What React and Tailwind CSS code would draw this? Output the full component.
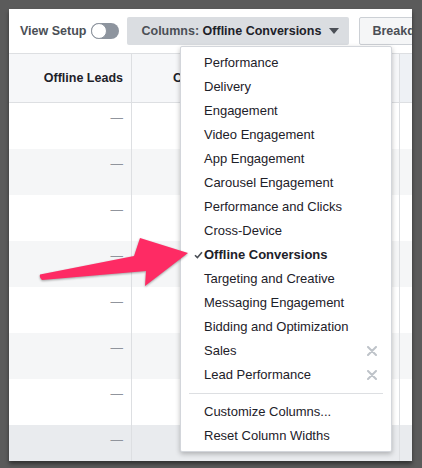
import React from 'react';

const menuItems = [
  'Performance',
  'Delivery',
  'Engagement',
  'Video Engagement',
  'App Engagement',
  'Carousel Engagement',
  'Performance and Clicks',
  'Cross-Device',
  'Offline Conversions',
  'Targeting and Creative',
  'Messaging Engagement',
  'Bidding and Optimization',
  'Sales',
  'Lead Performance',
];

const removable = ['Sales', 'Lead Performance'];

function XIcon() {
  return (
    <svg width="10" height="10" viewBox="0 0 10 10" className="shrink-0">
      <path d="M1 1 L9 9 M9 1 L1 9" stroke="#bec3c9" strokeWidth="2" strokeLinecap="round" />
    </svg>
  );
}

function Check() {
  return (
    <svg width="9" height="8" viewBox="0 0 9 8" className="absolute left-[13px] top-[8px]">
      <path d="M1 4.2 L3.4 6.6 L8 1.2" stroke="#4b4f56" strokeWidth="1.6" fill="none" />
    </svg>
  );
}

export default function App() {
  const rows = [0, 1, 2, 3, 4, 5, 6, 7];

  return (
    <div className="w-[422px] h-[468px] bg-[#5b5b5b] pt-[9px] pl-[9px] font-['Liberation_Sans',Arial,sans-serif]">
      <div className="relative w-[403px] h-[452px] bg-white overflow-hidden shadow-[0_3px_4px_rgba(0,0,0,0.45)]">
        {/* Toolbar */}
        <div className="h-[45px] flex items-center pl-[11px] border-b border-[#dddfe2] whitespace-nowrap">
          <span className="text-[12.5px] font-bold text-[#4b4f56]">View Setup</span>
          <div className="ml-[5px] w-[28px] h-[16px] rounded-full bg-[#8d949e] relative shrink-0">
            <div className="absolute left-0 top-0 w-[16px] h-[16px] rounded-full bg-white border border-[#8d949e]" />
          </div>
          <div className="ml-[8px] h-[28px] w-[222px] shrink-0 flex items-center pl-[14px] bg-[#dadde1] rounded-[2px] text-[12.5px] font-bold">
            <span className="text-[#4b4f56]">Columns:&nbsp;</span>
            <span className="text-[#1d2129]">Offline Conversions</span>
            <svg width="10" height="6" viewBox="0 0 10 6" className="ml-[8px] shrink-0">
              <path d="M0 0 L10 0 L5 6 Z" fill="#4b4f56" />
            </svg>
          </div>
          <div className="ml-[10px] h-[28px] shrink-0 flex items-center px-[12px] bg-[#f5f6f7] border border-[#ccd0d5] rounded-[2px] text-[12.5px] font-bold text-[#4b4f56]">
            Breakdown
          </div>
        </div>

        {/* Header */}
        <div className="h-[49px] flex border-b border-[#dddfe2] text-[12.5px] font-bold text-[#1d2129]">
          <div className="w-[123px] shrink-0 flex items-center justify-end pr-[8px] bg-[#f6f7f9] border-r border-[#dddfe2]">
            Offline Leads
          </div>
          <div className="w-[268px] shrink-0 flex items-center pl-[41px] bg-[#f6f7f9] border-r border-[#dddfe2] whitespace-nowrap">
            Cost per Offline Lead
          </div>
          <div className="flex-1 bg-[#eef1f5]" />
        </div>

        {/* Rows */}
        {rows.map((r) => (
          <div
            key={r}
            className={`h-[46px] flex ${r === 7 ? 'bg-[#e9ebee]' : r % 2 === 1 ? 'bg-[#f5f6f7]' : 'bg-white'}`}
          >
            <div className="w-[123px] shrink-0 flex justify-end pr-[8px] pt-[7px] border-r border-[#dddfe2] text-[12.5px] leading-[16px] text-[#90949c]">
              —
            </div>
            <div className="w-[268px] shrink-0 border-r border-[#dddfe2]" />
            <div className="flex-1" />
          </div>
        ))}

        {/* Columns menu */}
        <div className="absolute left-[171px] top-[37px] w-[212px] bg-white border border-[#d3d6db] rounded-[2px] pt-[4px] pb-[3px] shadow-[0_2px_5px_rgba(0,0,0,0.25)]">
          {menuItems.map((item) => {
            const active = item === 'Offline Conversions';
            return (
              <div
                key={item}
                className={`relative h-[24px] flex items-center justify-between pl-[23px] pr-[14px] text-[13px] text-[#1d2129] ${active ? 'font-bold text-[12.5px]' : ''}`}
              >
                {active && <Check />}
                <span>{item}</span>
                {removable.includes(item) && <XIcon />}
              </div>
            );
          })}
          <div className="mx-[8px] my-[6px] h-px bg-[#dddfe2]" />
          <div className="h-[24px] flex items-center pl-[23px] text-[13px] text-[#1d2129]">Customize Columns...</div>
          <div className="h-[24px] flex items-center pl-[23px] text-[13px] text-[#1d2129]">Reset Column Widths</div>
        </div>

        {/* Annotation arrow */}
        <svg
          className="absolute left-0 top-0 pointer-events-none drop-shadow-[0_1px_1px_rgba(0,0,0,0.35)]"
          width="403"
          height="452"
          viewBox="0 0 403 452"
        >
          <path
            d="M31 265.5 L125 247 L131 229 L179 244 L136 277 L137 262 L33 271 Q30 268 31 265.5 Z"
            fill="#fe2b64"
            strokeLinejoin="round"
          />
        </svg>
      </div>
    </div>
  );
}
